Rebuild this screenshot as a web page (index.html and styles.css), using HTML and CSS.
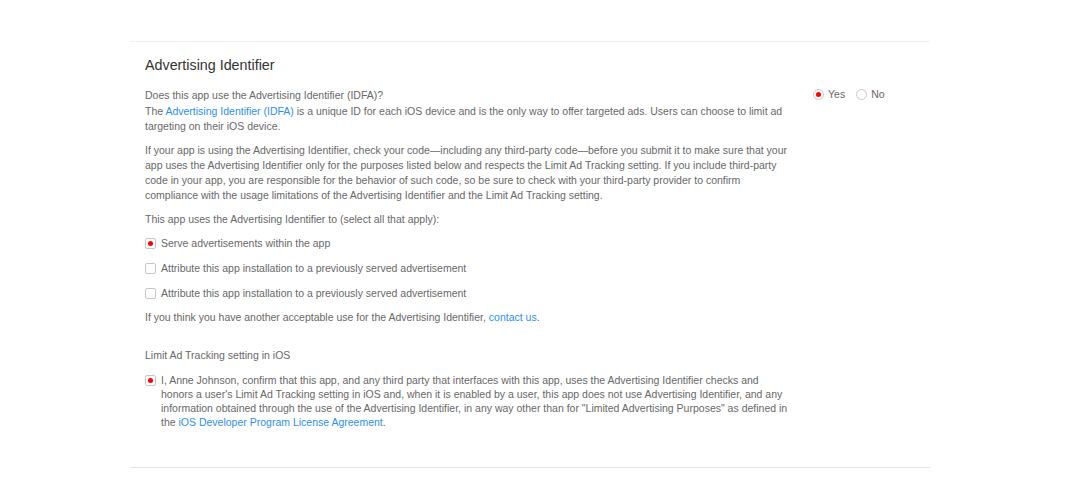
FILE: index.html
```html
<!DOCTYPE html>
<html>
<head>
<meta charset="utf-8">
<link rel="stylesheet" href="styles.css">
</head>
<body>
<div class="panel">
  <h2 class="title">Advertising Identifier</h2>
  <div class="row">
    <div class="main">
      <p class="q">Does this app use the Advertising Identifier (IDFA)?</p>
      <p class="p">The <a class="lnk">Advertising Identifier (IDFA)</a> is a unique ID for each iOS device and is the only way to offer targeted ads. Users can choose to limit ad<br>targeting on their iOS device.</p>
      <p class="p gap">If your app is using the Advertising Identifier, check your code—including any third-party code—before you submit it to make sure that your<br>app uses the Advertising Identifier only for the purposes listed below and respects the Limit Ad Tracking setting. If you include third-party<br>code in your app, you are responsible for the behavior of such code, so be sure to check with your third-party provider to confirm<br>compliance with the usage limitations of the Advertising Identifier and the Limit Ad Tracking setting.</p>
      <p class="p gap">This app uses the Advertising Identifier to (select all that apply):</p>
      <div class="opts">
        <div class="opt"><span class="box on"></span><span>Serve advertisements within the app</span></div>
        <div class="opt"><span class="box"></span><span>Attribute this app installation to a previously served advertisement</span></div>
        <div class="opt"><span class="box"></span><span>Attribute this app installation to a previously served advertisement</span></div>
      </div>
      <p class="p">If you think you have another acceptable use for the Advertising Identifier, <a class="lnk">contact us</a>.</p>
      <p class="p sub">Limit Ad Tracking setting in iOS</p>
      <div class="opt top"><span class="box on"></span><span>I, Anne Johnson, confirm that this app, and any third party that interfaces with this app, uses the Advertising Identifier checks and<br>honors a user's Limit Ad Tracking setting in iOS and, when it is enabled by a user, this app does not use Advertising Identifier, and any<br>information obtained through the use of the Advertising Identifier, in any way other than for "Limited Advertising Purposes" as defined in<br>the <a class="lnk">iOS Developer Program License Agreement</a>.</span></div>
    </div>
    <div class="side">
      <label class="radio"><span class="dot on"></span>Yes</label>
      <label class="radio"><span class="dot"></span>No</label>
    </div>
  </div>
</div>
</body>
</html>
```
FILE: styles.css
```css
html, body { margin: 0; padding: 0; background: #fff; }
body {
  font-family: "Liberation Sans", Arial, sans-serif;
  font-size: 10.5px;
  color: #686868;
}
.panel {
  width: 800px;
  margin: 41px 0 0 130px;
  border-top: 1px solid #f2f2f2;
  border-bottom: 1px solid #e4e4e4;
  padding: 13px 15px 38px 15px;
  box-sizing: border-box;
}
.title {
  margin: 0 0 12px 0;
  font-weight: normal;
  font-size: 14.3px;
  color: #333;
  line-height: 20px;
}
.row { display: flex; align-items: flex-start; }
.main { width: 660px; }
.side { display: flex; align-items: center; gap: 11px; margin-left: 8px; margin-top: -1px; }
p { margin: 0; }
.q { line-height: 16px; margin-bottom: 1px; }
.p { line-height: 15.3px; }
.gap { margin-top: 8px; }
.lnk { color: #2c8ff0; text-decoration: none; }
.opts { margin-top: 8px; display: flex; flex-direction: column; gap: 9px; margin-bottom: 9px; }
.opt { display: flex; align-items: center; gap: 5px; line-height: 16px; }
.opt.top { align-items: flex-start; line-height: 14px; margin-top: 9px; }
.opt.top .box { margin-top: 2px; }
.box {
  width: 9px; height: 9px; flex: none;
  border: 1px solid #c8c8c8; border-radius: 2px;
  background: #fff; position: relative;
}
.box.on::after {
  content: ""; position: absolute; left: 2px; top: 2px;
  width: 5px; height: 5px; border-radius: 50%; background: #f00;
}
.sub { margin-top: 23px; }
.radio { display: flex; align-items: center; gap: 4px; line-height: 16px; }
.dot {
  width: 9px; height: 9px; border-radius: 50%;
  border: 1px solid #c8c8c8; background: #fff; position: relative;
}
.dot.on::after {
  content: ""; position: absolute; left: 2px; top: 2px;
  width: 5px; height: 5px; border-radius: 50%; background: #f00;
}
```
